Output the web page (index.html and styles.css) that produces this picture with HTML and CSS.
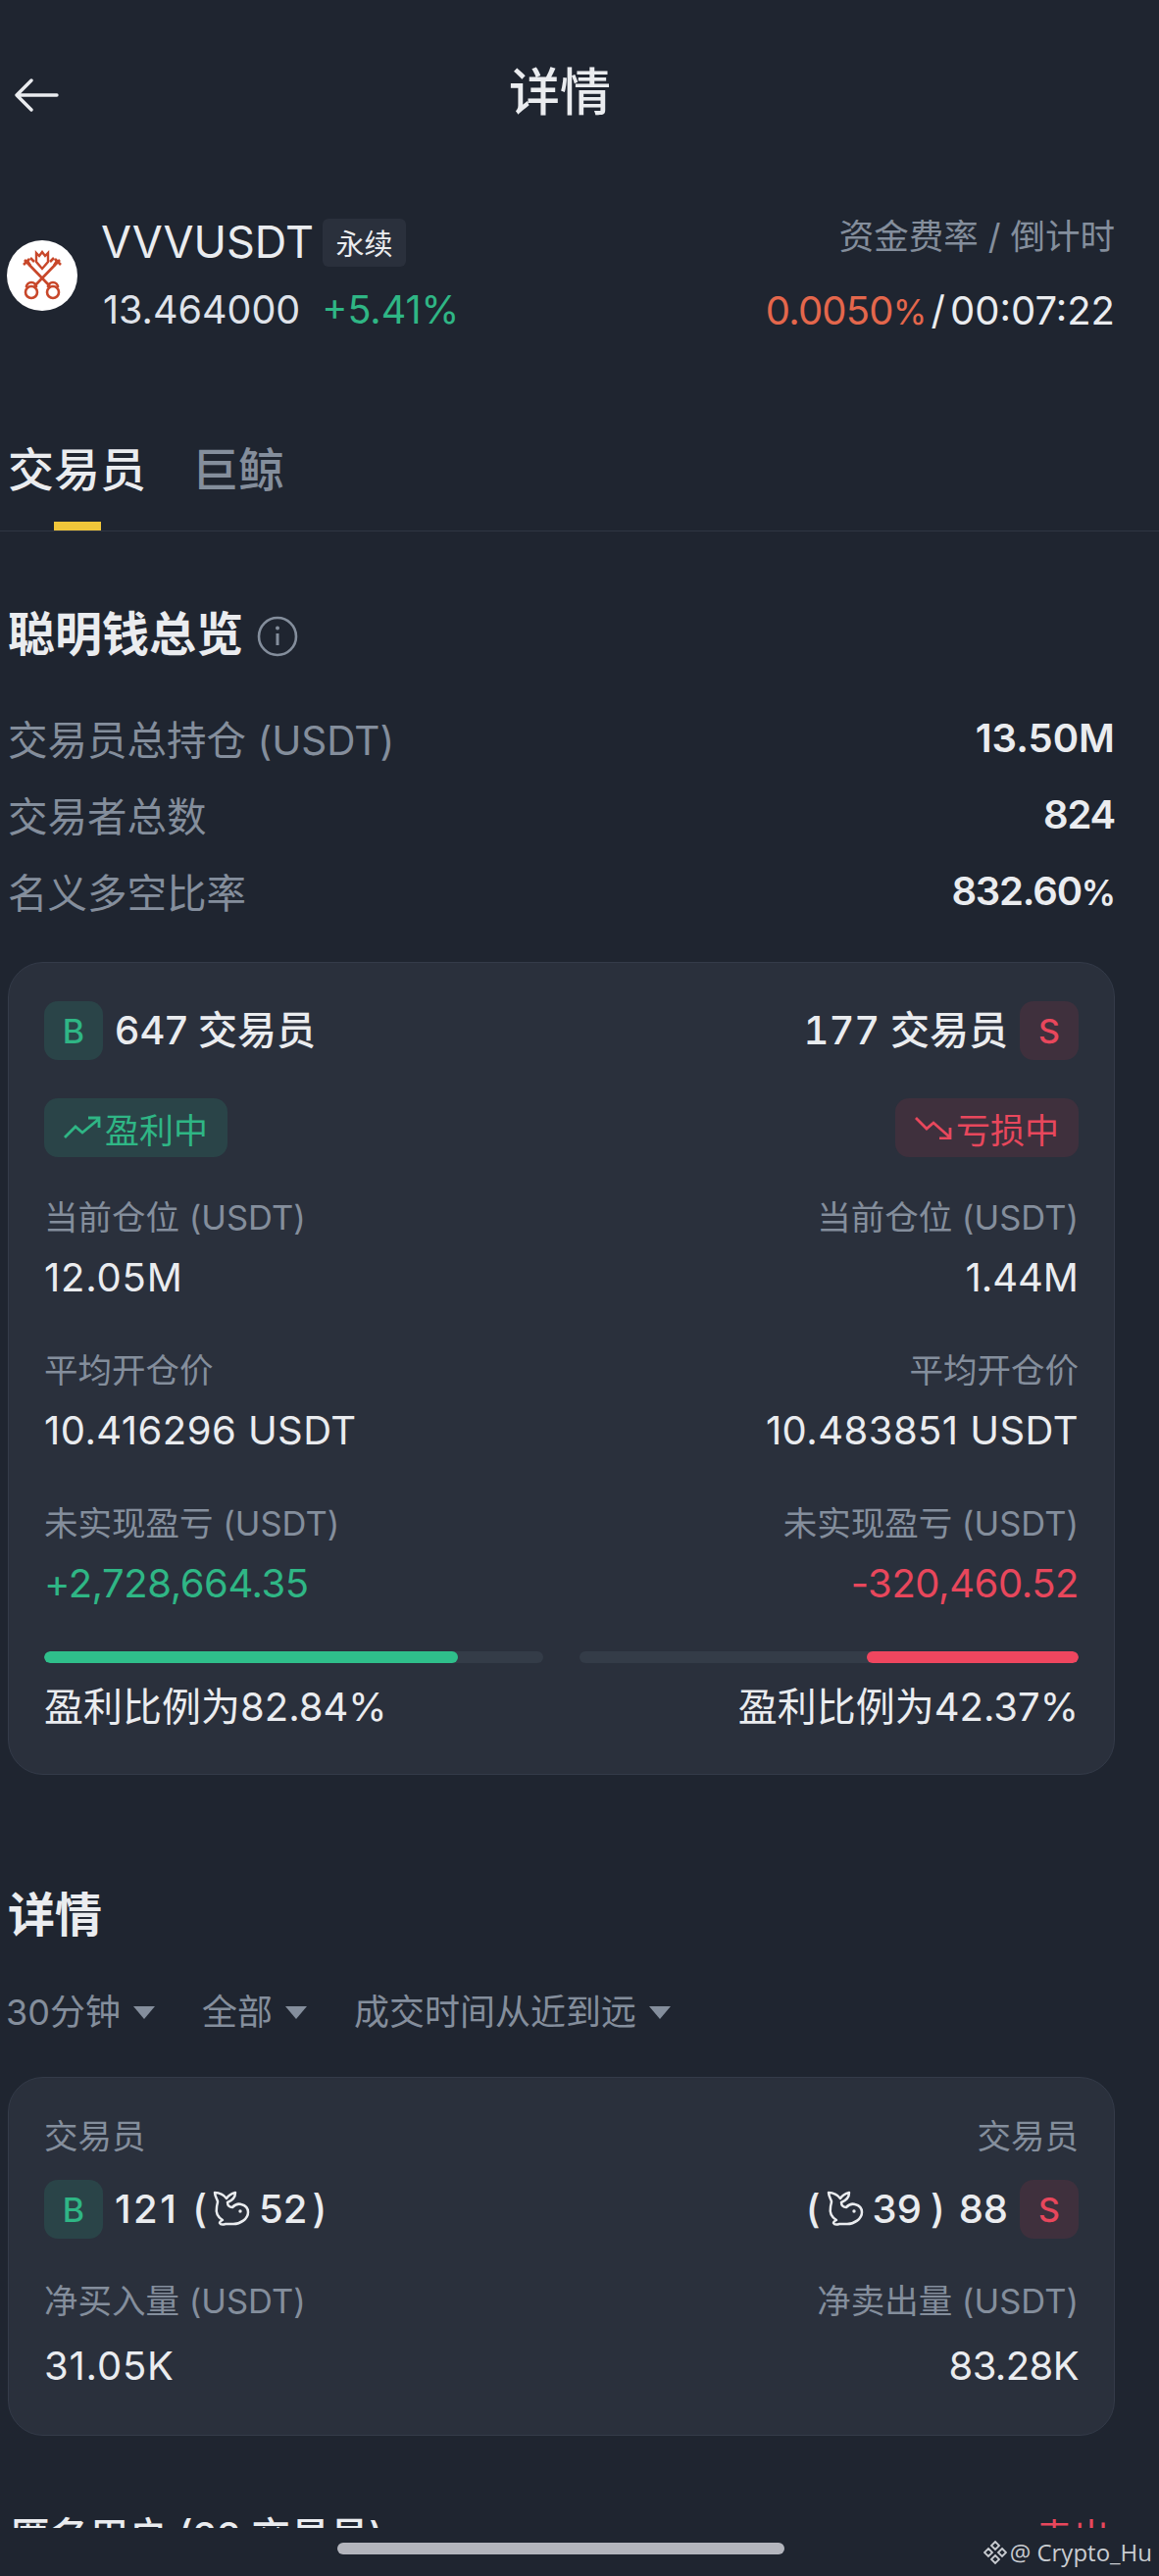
FILE: index.html
```html
<!DOCTYPE html>
<html lang="zh">
<head>
<meta charset="utf-8">
<title>详情</title>
<link rel="stylesheet" href="styles.css">
</head>
<body>
<svg class="defs" width="0" height="0" aria-hidden="true">
  <symbol id="whale" viewBox="0 0 38 38">
    <path d="M2 2c5 0 9 2 12 6 2-3 5-5 9-6 0 5-3 8-8 10 0 3 2 5 5 5 3-3 6-4 9-3 4 1 7 4 7 8 0 7-8 12-15 12h-8c-3 1-5 1-6-1 0-1 1-2 3-3-5-3-7-8-6-13 0-2 1-4 1-6-1-3-3-6-3-9z" fill="none" stroke="currentColor" stroke-width="2.500" stroke-linejoin="round"/>
    <circle cx="28" cy="21" r="1.700" fill="currentColor"/>
  </symbol>
</svg>
<div class="page">
  <header class="nav">
    <svg class="back" viewBox="0 0 46 34" width="46" height="34"><path d="M44 17H3M18 2 3 17l15 15" fill="none" stroke="#eaecef" stroke-width="3.400" stroke-linecap="round" stroke-linejoin="round"/></svg>
    <h1 class="nav-title">详情</h1>
  </header>

  <section class="coin">
    <div class="coin-logo">
      <svg viewBox="0 0 72 72" width="72" height="72">
        <circle cx="36" cy="36" r="36" fill="#fff"/>
        <g fill="none" stroke="#c8472a" stroke-width="2.600">
          <path d="M18 20 44 47M54 20 28 47"/>
          <path d="M17 25l6-6M21 21l3 5M24 18l4 4M55 25l-6-6M51 21l-3 5M48 18l-4 4"/>
          <circle cx="25" cy="53" r="6"/><circle cx="47" cy="53" r="6"/>
          <path d="M20 48a3 3 0 0 1 10 0M42 48a3 3 0 0 1 10 0"/>
        </g>
        <path d="M30 13l3 3 3-4 3 4 3-3v9l-6 7-6-7z" fill="none" stroke="#c8472a" stroke-width="2.400"/>
      </svg>
    </div>
    <div class="coin-main">
      <div class="coin-name-row">
        <span class="coin-name">VVVUSDT</span>
        <span class="coin-tag">永续</span>
      </div>
      <div class="coin-price-row">
        <span>13.464000</span>
        <span class="green">+5.41%</span>
      </div>
    </div>
    <div class="coin-side">
      <div class="side-label">资金费率 / 倒计时</div>
      <div class="side-value"><span class="orange rate">0.0050<span class="pct">%</span></span><span class="slash">/</span><span>00:07:22</span></div>
    </div>
  </section>

  <nav class="tabs">
    <div class="tab tab-active">交易员</div>
    <div class="tab">巨鲸</div>
  </nav>

  <main class="content">
    <h2 class="section-title">聪明钱总览
      <svg class="info" viewBox="0 0 42 42" width="42" height="42"><circle cx="21" cy="21" r="19" fill="none" stroke="#848e9c" stroke-width="2.600"/><path d="M21 18v12" stroke="#848e9c" stroke-width="3"/><circle cx="21" cy="12.500" r="2" fill="#848e9c"/></svg>
    </h2>

    <dl class="stats">
      <div class="stat"><dt>交易员总持仓 (USDT)</dt><dd>13.50M</dd></div>
      <div class="stat"><dt>交易者总数</dt><dd class="stat-tight">824</dd></div>
      <div class="stat"><dt>名义多空比率</dt><dd class="stat-tight">832.60<span class="pct">%</span></dd></div>
    </dl>

    <article class="card summary">
      <div class="row row-head">
        <div class="side-head"><span class="badge badge-b">B</span><span class="count">647 交易员</span></div>
        <div class="side-head"><span class="count tnum">177 交易员</span><span class="badge badge-s">S</span></div>
      </div>
      <div class="row row-pill">
        <span class="pill pill-up">
          <svg viewBox="0 0 38 24" width="38" height="24"><path d="M1 22 12 11l7 6L36 3M25 2h11v10" fill="none" stroke="currentColor" stroke-width="2.800"/></svg>盈利中</span>
        <span class="pill pill-down">
          <svg viewBox="0 0 38 24" width="38" height="24"><path d="M1 2l11 11 7-6 17 15M25 23h11V12" fill="none" stroke="currentColor" stroke-width="2.800"/></svg>亏损中</span>
      </div>
      <div class="row metric metric-first"><div><div class="m-label">当前仓位 (USDT)</div><div class="m-value m-wide2">12.05M</div></div><div class="right"><div class="m-label">当前仓位 (USDT)</div><div class="m-value">1.44M</div></div></div>
      <div class="row metric"><div><div class="m-label">平均开仓价</div><div class="m-value m-wide">10.416296 USDT</div></div><div class="right"><div class="m-label">平均开仓价</div><div class="m-value m-wide">10.483851 USDT</div></div></div>
      <div class="row metric"><div><div class="m-label">未实现盈亏 (USDT)</div><div class="m-value green m-tight">+2,728,664.35</div></div><div class="right"><div class="m-label">未实现盈亏 (USDT)</div><div class="m-value red m-tight">-320,460.52</div></div></div>
      <div class="bars">
        <div class="track"><div class="fill fill-g" style="width:82.84%"></div></div>
        <div class="track track-r"><div class="fill fill-r" style="width:42.37%"></div></div>
      </div>
      <div class="row ratio"><span>盈利比例为82.84%</span><span>盈利比例为42.37%</span></div>
    </article>

    <h2 class="section-title section-second">详情</h2>

    <div class="filters">
      <span class="filter">30分钟<i class="caret"></i></span>
      <span class="filter">全部<i class="caret"></i></span>
      <span class="filter">成交时间从近到远<i class="caret"></i></span>
    </div>

    <article class="card detail">
      <div class="row m-label"><span>交易员</span><span>交易员</span></div>
      <div class="row row-whale">
        <div class="side-head"><span class="badge badge-b">B</span><span class="count whale-count"><span class="num-wide">121</span><span class="open-gap">(</span><svg class="whale" width="38" height="38"><use href="#whale"/></svg><span>52</span><span class="close">)</span></span></div>
        <div class="side-head"><span class="count whale-count"><span>(</span><svg class="whale" width="38" height="38"><use href="#whale"/></svg><span>39</span><span class="close close-wide">)</span><span class="tail-num">88</span></span><span class="badge badge-s">S</span></div>
      </div>
      <div class="row metric metric-last"><div><div class="m-label">净买入量 (USDT)</div><div class="m-value m-wide2">31.05K</div></div><div class="right"><div class="m-label">净卖出量 (USDT)</div><div class="m-value m-tight2">83.28K</div></div></div>
    </article>

    <div class="row next-head"><span class="next-title">匿名用户 (22 交易员)</span><span class="red next-sell">卖出</span></div>
  </main>
</div>
<footer class="foot">
  <div class="home-bar"></div>
  <div class="watermark">
    <svg viewBox="0 0 24 24" width="24" height="26"><path d="M12 1l4 4-4 4-4-4zM12 15l4 4-4 4-4-4zM5 8l4 4-4 4-4-4zM19 8l4 4-4 4-4-4z" fill="none" stroke="#c9ccd1" stroke-width="1.800"/></svg>
    <span>@ Crypto_Hu</span>
  </div>
</footer>
</body>
</html>
```
FILE: styles.css
```css
* { box-sizing: border-box; }
html, body { margin: 0; padding: 0; }
body {
  position: relative;
  width: 1182px;
  height: 2627px;
  overflow: hidden;
  background: #1f2530;
  color: #eaecef;
  font-family: "Inter", "Noto Sans CJK SC", sans-serif;
}
.defs { position: absolute; }
.page { height: 2578px; overflow: hidden; }

.green { color: #2fb685; }
.red { color: #e8475c; }
.orange { color: #e4674c; }
.pct { font-size: .88em; }
.tnum { font-feature-settings: "tnum"; }

.nav {
  position: relative;
  height: 190px;
  display: flex;
  align-items: center;
  justify-content: center;
  padding-right: 40px;
}
.back { position: absolute; left: 14px; top: 80px; }
.nav-title { margin: 0; font-size: 52px; font-weight: 500; line-height: 60px; }

.coin {
  display: flex;
  align-items: flex-start;
  height: 140px;
  padding: 20px 45px 0 7px;
}
.coin-logo { width: 72px; height: 72px; margin-top: 35px; flex: none; }
.coin-logo svg { display: block; }
.coin-main { margin-left: 24px; flex: 1; }
.coin-name-row { display: flex; align-items: center; height: 64px; margin-top: 5px; }
.coin-name { font-size: 45px; font-weight: 400; line-height: 50px; }
.coin-tag {
  margin-left: 9px;
  width: 85px;
  height: 49px;
  display: flex;
  align-items: center;
  justify-content: center;
  background: #2a303c;
  border-radius: 6px;
  font-size: 29px;
}
.coin-price-row { display: flex; gap: 22px; font-size: 39.500px; line-height: 50px; margin: 12px 0 0 2px; color: #dfe3ea; }
.coin-side { text-align: right; }
.side-label { font-size: 35.500px; line-height: 50px; color: #848e9c; margin-top: 7px; }
.side-value { font-size: 40px; line-height: 50px; margin-top: 25px; display: flex; justify-content: flex-end; align-items: baseline; }
.rate { letter-spacing: -.8px; }
.slash { margin: 0 5px; }

.tabs {
  display: flex;
  gap: 47px;
  height: 212px;
  padding: 0 0 0 8px;
  align-items: flex-end;
  border-bottom: 1px solid #2f3643;
}
.tab {
  position: relative;
  font-size: 47px;
  line-height: 60px;
  height: 92px;
  color: #848e9c;
  font-weight: 500;
}
.tab-active { color: #eaecef; }
.tab-active::after {
  content: "";
  position: absolute;
  left: 47px;
  bottom: 0;
  width: 48px;
  height: 9px;
  background: #f0c63a;
}

.content { padding: 0 45px 0 8px; }

.section-title {
  margin: 0;
  display: flex;
  align-items: center;
  gap: 14px;
  font-size: 48px;
  line-height: 60px;
  font-weight: 700;
  padding-top: 75px;
}
.info { display: block; margin-top: 4px; }
.section-second { padding-top: 113px; }

.stats { margin: 36px 0 0; }
.stat {
  display: flex;
  justify-content: space-between;
  align-items: center;
  height: 78px;
}
.stat dt { font-size: 40.500px; color: #848e9c; }
.stat dd { margin: 0; font-size: 40px; font-weight: 600; }
.stat dd.stat-tight { letter-spacing: -1.200px; }

.card {
  background: #2a303c;
  border: 1px solid #343b49;
  border-radius: 36px;
  padding: 0 36px;
}
.summary { margin-top: 34px; height: 829px; padding-top: 39px; }
.row { display: flex; justify-content: space-between; }
.row-head { height: 60px; }
.side-head { display: flex; align-items: center; gap: 12px; }
.badge {
  width: 60px;
  height: 60px;
  border-radius: 14px;
  display: flex;
  align-items: center;
  justify-content: center;
  font-size: 34px;
  font-weight: 500;
}
.badge-b { background: #2a4448; color: #2fb685; }
.badge-s { background: #3f303d; color: #e8475c; }
.count { font-size: 40px; font-weight: 500; line-height: 50px; }

.row-pill { margin-top: 39px; height: 60px; }
.pill {
  display: flex;
  align-items: center;
  gap: 4px;
  height: 60px;
  padding: 0 20px;
  border-radius: 14px;
  font-size: 35px;
}
.pill-up { background: #2a4448; color: #2fb685; }
.pill-down { background: #3f303d; color: #e8475c; }

.metric { margin-top: 33px; height: 123px; }
.metric-first { margin-top: 37px; }
.right { text-align: right; }
.m-label { font-size: 34.500px; line-height: 50px; color: #848e9c; }
.m-value { font-size: 40px; line-height: 50px; margin-top: 11px; }
.m-wide { letter-spacing: .45px; }
.m-wide2 { letter-spacing: .8px; }
.m-tight { letter-spacing: -.45px; }
.m-tight2 { letter-spacing: -.6px; }

.bars { display: flex; gap: 37px; margin-top: 32px; }
.track { flex: 1; height: 12px; background: #343c48; border-radius: 6px; overflow: hidden; }
.track-r { display: flex; justify-content: flex-end; }
.fill { height: 12px; border-radius: 6px; }
.fill-g { background: #2fbf8b; }
.fill-r { background: #f0465f; }
.ratio { margin-top: 20px; font-size: 40px; line-height: 50px; }

.filters { display: flex; gap: 48px; margin-top: 44px; margin-left: -2px; }
.filter { display: flex; align-items: center; gap: 13px; font-size: 36px; line-height: 50px; color: #848e9c; }
.caret {
  width: 0;
  height: 0;
  border-left: 11px solid transparent;
  border-right: 11px solid transparent;
  border-top: 13px solid #848e9c;
}

.detail { margin-top: 41px; height: 366px; padding-top: 35px; }
.row-whale { margin-top: 19px; height: 60px; }
.whale-count { display: flex; align-items: center; white-space: pre; }
.num-wide { letter-spacing: 2.500px; }
.open-gap { margin-left: 14px; }
.whale { display: block; color: #eaecef; margin: 0 9px 0 6px; }
.close { margin-left: 5px; }
.close-wide { margin-left: 9px; }
.tail-num { margin-left: 14px; }
.metric-last { margin-top: 39px; }
.metric-last .m-value { margin-top: 16px; }

.next-head { margin-top: 73px; padding: 0 5px 0 3px; }
.next-title { font-size: 40px; font-weight: 500; line-height: 60px; }
.next-sell { font-size: 38px; line-height: 60px; }

.foot { position: relative; height: 49px; }
.home-bar {
  position: absolute;
  left: 344px;
  top: 15px;
  width: 456px;
  height: 12px;
  border-radius: 6px;
  background: #b3b5bd;
}
.watermark {
  position: absolute;
  right: 7px;
  top: 8px;
  display: flex;
  align-items: center;
  gap: 3px;
  font-family: "Open Sans", sans-serif;
  font-size: 24px;
  color: #c9ccd1;
}
```
